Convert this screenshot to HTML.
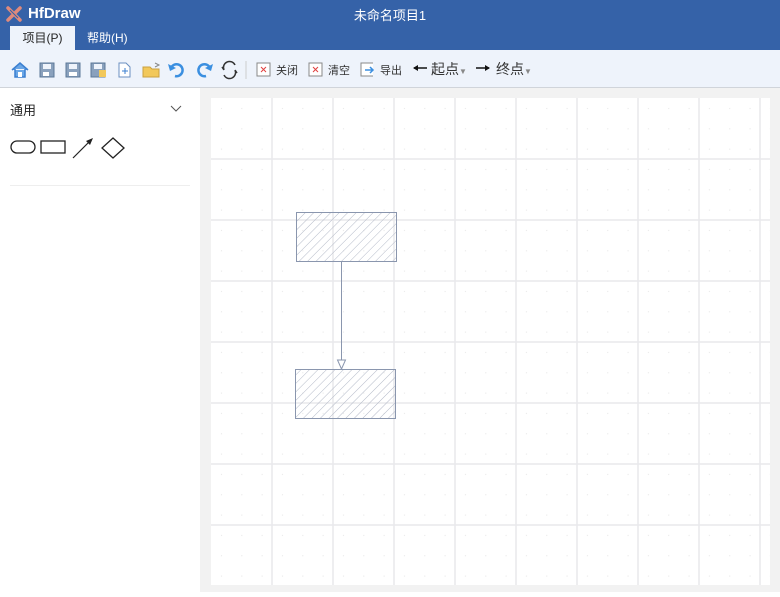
<!DOCTYPE html>
<html><head><meta charset="utf-8"><style>
*{margin:0;padding:0;box-sizing:border-box}
body{width:780px;height:592px;overflow:hidden;font-family:"Liberation Sans","Noto Sans CJK SC",sans-serif;background:#fff;position:relative}
.title{position:absolute;left:0;top:0;width:780px;height:50px;background:#3562a8;color:#fff}
.title .app{position:absolute;left:28px;top:5px;font-size:15px;font-weight:bold}
.title .name{position:absolute;left:0;width:780px;top:5px;text-align:center;font-size:13px}
.tab{position:absolute;top:26px;height:24px;font-size:12px;line-height:24px;padding:0 12px}
.tab.a{left:10px;background:#eef3fb;color:#222;width:65px;text-align:center;padding:0}
.tab.b{left:75px;color:#fff}
.tb{position:absolute;left:0;top:50px;width:780px;height:38px;background:#eef3fb;border-bottom:1px solid #d0d4da}
.tb span{position:absolute;top:12px;font-size:11px;color:#333}
.side{position:absolute;left:0;top:88px;width:200px;height:504px;background:#fff}
.canvas{position:absolute;left:200px;top:88px;width:580px;height:504px;background:#f2f2f2}
</style></head><body>
<div class="title">
<svg style="position:absolute;left:6px;top:6px" width="16" height="16" viewBox="0 0 16 16"><path d="M2 2L14 14M14 2L2 14" stroke="#e08a7c" stroke-width="3.5" stroke-linecap="round"/><path d="M4 4L12 12" stroke="#3562a8" stroke-width="1"/></svg>
<div class="app">HfDraw</div><div class="name">未命名项目1</div>
<div class="tab a">项目(P)</div><div class="tab b">帮助(H)</div>
</div>
<div class="tb">
<svg style="position:absolute;left:10px;top:10px" width="240" height="20" viewBox="0 0 240 20">
<path d="M2 10L10 3L18 10M5 9V17H15V9" fill="#6aa6e6" stroke="#3b7fd0" stroke-width="1.5"/><rect x="8" y="12" width="4" height="5" fill="#fff"/>
<rect x="30" y="3" width="14" height="14" fill="#8aa1bd" stroke="#5c7898"/><rect x="33" y="4" width="8" height="5" fill="#eef3fb"/><rect x="33" y="12" width="6" height="4" fill="#fff"/>
<rect x="56" y="3" width="14" height="14" fill="#8aa1bd" stroke="#5c7898"/><rect x="59" y="4" width="8" height="5" fill="#eef3fb"/><rect x="59" y="12" width="8" height="4" fill="#fff"/>
<rect x="81" y="3" width="14" height="14" fill="#8aa1bd" stroke="#5c7898"/><rect x="84" y="4" width="8" height="5" fill="#eef3fb"/><rect x="89" y="10" width="7" height="7" fill="#f2c85a"/>
<path d="M109 3H116L120 7V17H109Z" fill="#fff" stroke="#6b8fc0"/><path d="M112 11H118M115 8V14" stroke="#3b7fd0"/>
<path d="M133 7H140L142 9H149V17H133Z" fill="#f2c85a" stroke="#c9a040"/><path d="M145 3L149 5L145 7" stroke="#888" fill="none"/>
<path d="M161 8A6 6 0 1 1 165 16" stroke="#3b8fe0" stroke-width="2.5" fill="none"/><path d="M158 4L160 11L166 8Z" fill="#3b8fe0"/>
<path d="M200 8A6 6 0 1 0 196 16" stroke="#3b8fe0" stroke-width="2.5" fill="none"/><path d="M203 4L201 11L195 8Z" fill="#3b8fe0"/>
<path d="M225 5A6 6 0 0 0 214 10M214 10L212 7M214 15A6 6 0 0 0 225 10M225 10L227 13" stroke="#333" stroke-width="1.5" fill="none"/>
<path d="M236 1V19" stroke="#ccc"/>
</svg>
<svg style="position:absolute;left:256px;top:12px" width="16" height="16"><rect x="1" y="1" width="13" height="13" fill="#fff" stroke="#888"/><path d="M5 5L10 10M10 5L5 10" stroke="#e04040"/></svg><span style="left:276px">关闭</span>
<svg style="position:absolute;left:308px;top:12px" width="16" height="16"><rect x="1" y="1" width="13" height="13" fill="#fff" stroke="#888"/><path d="M5 5L10 10M10 5L5 10" stroke="#e04040"/></svg><span style="left:328px">清空</span>
<svg style="position:absolute;left:360px;top:12px" width="16" height="16"><path d="M13 1H1V14H13" fill="#fff" stroke="#888"/><path d="M5 8H13M10 5L13 8L10 11" stroke="#3b8fe0" fill="none" stroke-width="1.5"/></svg><span style="left:380px">导出</span>
<svg style="position:absolute;left:412px;top:63px;position:fixed" width="16" height="10"><path d="M2 5H15" stroke="#111" stroke-width="1.5"/><path d="M1 5L6 2V8Z" fill="#111"/></svg>
<span style="left:431px;font-size:14px;top:9px">起点<small style="font-size:8px;color:#888">▼</small></span>
<svg style="position:absolute;left:475px;top:63px;position:fixed" width="16" height="10"><path d="M1 5H14" stroke="#111" stroke-width="1.5"/><path d="M15 5L10 2V8Z" fill="#111"/></svg>
<span style="left:496px;font-size:14px;top:9px">终点<small style="font-size:8px;color:#888">▼</small></span>
</div>
<div class="side">
<div style="position:absolute;left:10px;top:12px;font-size:13px;color:#222">通用</div>
<svg style="position:absolute;left:170px;top:17px" width="12" height="8"><path d="M1 1L6 6L11 1" stroke="#555" fill="none"/></svg>
<svg style="position:absolute;left:10px;top:48px" width="120" height="26"><rect x="1" y="5" width="24" height="12" rx="6" fill="none" stroke="#222" stroke-width="1.3"/><rect x="31" y="5" width="24" height="12" fill="none" stroke="#222" stroke-width="1.3"/><path d="M63 22L80 5" stroke="#222" stroke-width="1.2"/><path d="M83 2L76 5L80 9Z" fill="#222"/><path d="M103 2L114 12L103 22L92 12Z" fill="none" stroke="#222" stroke-width="1.3"/></svg>
<div style="position:absolute;left:10px;top:97px;width:180px;border-top:1px solid #eee"></div>
</div>
<div class="canvas">
<svg width="580" height="504" viewBox="200 88 580 504">
<defs><pattern id="h" width="6" height="6" patternUnits="userSpaceOnUse" patternTransform="rotate(45)"><path d="M0 0V6" stroke="#b4bac8" stroke-width="1"/></pattern>
<pattern id="d" x="211" y="98" width="20.33" height="20.33" patternUnits="userSpaceOnUse"><rect x="10" y="10" width="1" height="1" fill="#e4e4e4"/></pattern></defs>
<rect x="211" y="98" width="559" height="487" fill="#fff"/>
<rect x="211" y="98" width="559" height="487" fill="url(#d)"/>
<g stroke="#e9e9ec" stroke-width="1.5">
<path d="M272 98V585M333 98V585M394 98V585M455 98V585M516 98V585M577 98V585M638 98V585M699 98V585M760 98V585"/>
<path d="M211 159H770M211 220H770M211 281H770M211 342H770M211 403H770M211 464H770M211 525H770"/>
</g>
<rect x="296.5" y="212.5" width="100" height="49" fill="url(#h)" stroke="#8a96ae"/>
<rect x="295.5" y="369.5" width="100" height="49" fill="url(#h)" stroke="#8a96ae"/>
<path d="M341.5 262V360" stroke="#8a96ae"/>
<path d="M337.5 360H345.5L341.5 369Z" fill="#fff" stroke="#8a96ae"/>
</svg>
</div>
</body></html>
